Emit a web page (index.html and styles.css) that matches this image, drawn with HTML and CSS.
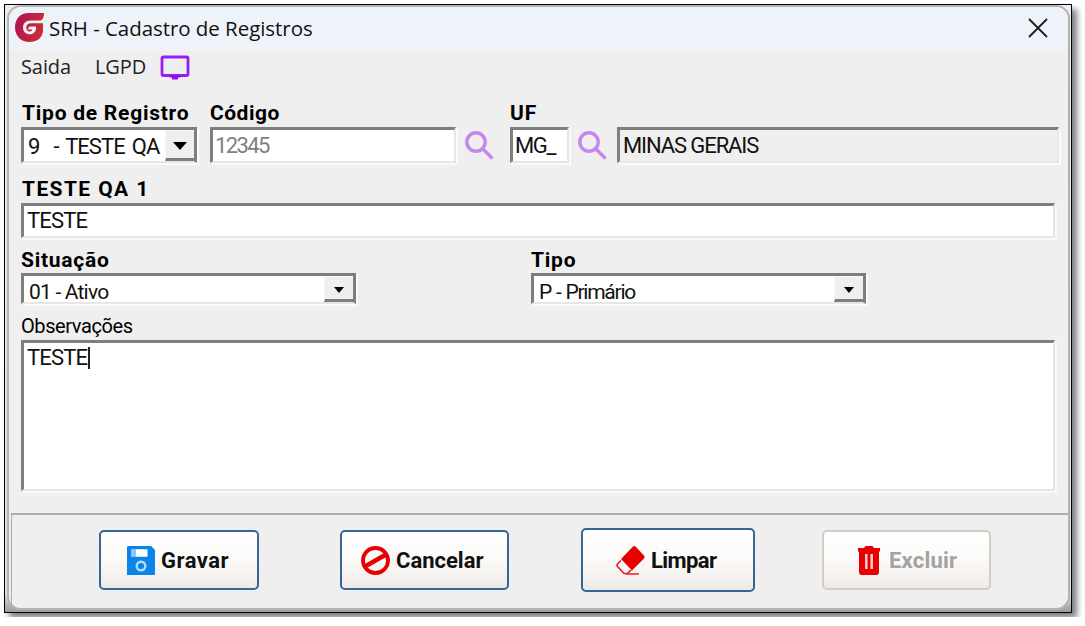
FILE: index.html
```html
<!DOCTYPE html>
<html lang="pt-BR">
<head>
  <meta charset="UTF-8">
  <title>SRH - Cadastro de Registros</title>
  <link rel="stylesheet" href="styles.css">
</head>
<body>
  <div class="frame">
    <div class="window">
      <div class="titlebar">
        <svg class="logo" width="29" height="29" viewBox="0 0 29 29">
          <defs>
            <linearGradient id="logoFill" x1="0" y1="0" x2="1" y2="0.3">
              <stop offset="0" stop-color="#ad1253"/>
              <stop offset="1" stop-color="#cb2b36"/>
            </linearGradient>
          </defs>
          <path fill="url(#logoFill)" d="M29 0H14C5 0 0 6 0 14.500C0 23 6 29 14.500 29C23 29 28 24 28 17V9H23C27 8 29 5 29 0Z"/>
          <path fill="#eef3f9" d="M29 7.500H16C11 7.500 8 10.300 8 14.500C8 18.800 11 21.300 14.500 21.300C18.300 21.300 20.600 19.200 21 16V13.500H14.500L12.500 16.500H17.300C16.800 18 16 18.500 14.500 18.500C12.500 18.500 11.300 17 11.300 14.700C11.300 12 13 10.300 16 10.300H29Z"/>
        </svg>
        <span class="title">SRH - Cadastro de Registros</span>
        <svg class="close" width="20" height="20" viewBox="0 0 20 20">
          <path d="M1 1L19 19M19 1L1 19" stroke="#1c1c1c" stroke-width="1.800" fill="none"/>
        </svg>
      </div>

      <div class="menu">
        <span class="menu-saida">Saida</span>
        <span class="menu-lgpd">LGPD</span>
        <svg width="30" height="25" viewBox="0 0 30 25">
          <rect x="2" y="2" width="26" height="18.500" rx="1.500" fill="none" stroke="#9a1df5" stroke-width="2.800"/>
          <path d="M9.500 20H20.500V22.500H18V24.500H12V22.500H9.500Z" fill="#8d0ef0"/>
        </svg>
      </div>

      <div class="form">
        <div class="row row-top">
          <div class="group group-registro">
            <div class="label label-registro">Tipo de Registro</div>
            <div class="field select">
              <span class="value value-registro">9 &nbsp;- TESTE QA</span>
              <span class="arrow"><svg width="14" height="8" viewBox="0 0 14 8"><path d="M0 0H14L7 8Z"/></svg></span>
            </div>
          </div>
          <div class="group group-codigo">
            <div class="label label-codigo">Código</div>
            <div class="field disabled"><span class="value value-codigo">12345</span></div>
          </div>
          <svg class="search" width="29" height="29" viewBox="0 0 29 29">
            <circle cx="11" cy="11" r="9.200"/>
            <path d="M17.500 17.500L27.500 27.500"/>
          </svg>
          <div class="group group-uf">
            <div class="label label-uf">UF</div>
            <div class="field"><span class="value value-uf">MG_</span></div>
          </div>
          <svg class="search search-uf" width="29" height="29" viewBox="0 0 29 29">
            <circle cx="11" cy="11" r="9.200"/>
            <path d="M17.500 17.500L27.500 27.500"/>
          </svg>
          <div class="group group-estado">
            <div class="field readonly"><span class="value value-estado">MINAS GERAIS</span></div>
          </div>
        </div>

        <div class="label label-teste">TESTE QA 1</div>
        <div class="field field-teste"><span class="value value-teste">TESTE</span></div>

        <div class="row row-mid">
          <div class="group group-combo">
            <div class="label label-situacao">Situação</div>
            <div class="field select combo">
              <span class="value value-ativo">01 - Ativo</span>
              <span class="arrow"><svg width="10" height="6" viewBox="0 0 10 6"><path d="M0 0H10L5 6Z"/></svg></span>
            </div>
          </div>
          <div class="group group-combo">
            <div class="label label-tipo">Tipo</div>
            <div class="field select combo">
              <span class="value value-primario">P - Primário</span>
              <span class="arrow"><svg width="10" height="6" viewBox="0 0 10 6"><path d="M0 0H10L5 6Z"/></svg></span>
            </div>
          </div>
        </div>

        <div class="label label-obs">Observações</div>
        <div class="field memo"><span class="value value-teste">TESTE</span><span class="caret"></span></div>
      </div>

      <div class="footer">
        <button class="btn btn-gravar">
          <svg width="28" height="29" viewBox="0 0 28 29">
            <path d="M1 0H24L28 4V29H0V1Z" fill="#0a84ea"/>
            <rect x="4" y="3" width="17" height="8" rx="1" fill="#8cc6f7"/>
            <rect x="9" y="3.500" width="11" height="7" fill="#fff"/>
            <circle cx="14" cy="20" r="4.300" fill="none" stroke="#b5dcfb" stroke-width="2.400"/>
          </svg>
          <span class="text-gravar">Gravar</span>
        </button>
        <button class="btn btn-cancelar">
          <svg width="29" height="29" viewBox="0 0 29 29">
            <circle cx="14.500" cy="14.500" r="12.500" fill="none" stroke="#e80000" stroke-width="3.800"/>
            <path d="M4 20.500L25 8.500" stroke="#e80000" stroke-width="4.500"/>
          </svg>
          <span class="text-cancelar">Cancelar</span>
        </button>
        <button class="btn btn-limpar">
          <svg width="29" height="29" viewBox="0 0 29 29">
            <path d="M17 0.500Q18.500 -0.500 20 1L28 9.500Q29 11 28 12.500L16 24.500L5 13Z" fill="#e80000"/>
            <path d="M5 14.500L1.500 18Q0.500 19 1.500 20.500L8 27.500H11.500L15 24M10 28H23" fill="none" stroke="#e8202a" stroke-width="1.700"/>
          </svg>
          <span class="text-limpar">Limpar</span>
        </button>
        <button class="btn btn-excluir" disabled>
          <svg width="22" height="29" viewBox="0 0 22 29">
            <path d="M0 2H6L7.500 0H14.500L16 2H22V5.500H0Z" fill="#e80000"/>
            <path d="M1 5H21V26Q21 29 18 29H4Q1 29 1 26Z" fill="#e80000"/>
            <path d="M8.300 8V23M13.700 8V23" stroke="#f7cfcf" stroke-width="2.500"/>
          </svg>
          <span class="text-excluir">Excluir</span>
        </button>
      </div>
    </div>
  </div>
</body>
</html>
```

FILE: styles.css
```css
* {
  box-sizing: border-box;
}

body {
  margin: 0;
  padding: 4px;
  background: #fff;
  font-family: Roboto, "Liberation Sans", sans-serif;
  color: #111;
  overflow: hidden;
}

.frame {
  width: 1068px;
  height: 609px;
  padding: 0 1px 2px 2px;
  border: 1px solid #000;
  background: linear-gradient(#ececec, #dedede 97%, #9c9c9c);
  box-shadow: 5px 5px 6px rgba(0, 0, 0, 0.5);
}

.window {
  display: flex;
  flex-direction: column;
  height: 605px;
  border: 2px solid #b2b2b2;
  border-radius: 14px;
  background: #efefef;
  overflow: hidden;
}

.titlebar {
  display: flex;
  align-items: center;
  height: 44px;
  padding: 0 20px 0 6px;
  background: #eef3f9;
}

.logo {
  margin-top: -3px;
}

.title {
  flex: 1;
  margin-left: 5px;
  margin-top: -3px;
  font-family: "Open Sans", "Noto Sans", sans-serif;
  font-size: 20.5px;
  letter-spacing: -0.05px;
  white-space: nowrap;
}

.close {
  margin-top: -2px;
}

.menu {
  display: flex;
  align-items: center;
  height: 32px;
  padding-left: 12px;
  font-family: "Open Sans", "Noto Sans", sans-serif;
  font-size: 20px;
  color: #222;
}

.menu span {
  margin-top: -2px;
  letter-spacing: -0.1px;
  white-space: nowrap;
}

.menu-saida {
  width: 74px;
}

.menu-lgpd {
  width: 65px;
}

.form {
  height: 430px;
  padding: 18px 6px 0 12px;
}

.row {
  display: flex;
  align-items: flex-end;
}

.label {
  height: 26px;
  padding-left: 1px;
  line-height: 25px;
  font-size: 21px;
  font-weight: bold;
  letter-spacing: 0.75px;
  color: #000;
  white-space: nowrap;
}

.label-codigo {
  padding-left: 0;
  letter-spacing: 0.5px;
}

.label-uf {
  padding-left: 0;
  letter-spacing: 1px;
}

.label-situacao,
.label-tipo {
  padding-left: 0;
  line-height: 27px;
}

.field {
  display: flex;
  height: 35px;
  border: solid #7e7e7e;
  border-width: 3px 2px 2px 3px;
  border-right-color: #e6e6e6;
  border-bottom-color: #e6e6e6;
  background: #fff;
  box-shadow: 2px 2px 0 #fafafa;
}

.value {
  font-size: 22px;
  line-height: 30px;
  margin-left: 3px;
  white-space: pre;
}

.value-registro {
  margin-left: 4px;
  line-height: 33px;
  letter-spacing: -0.95px;
  word-spacing: 2.5px;
}

.value-codigo {
  margin-left: 2px;
  line-height: 31px;
  letter-spacing: -1.6px;
}

.value-uf {
  margin-left: 2px;
  line-height: 31px;
  letter-spacing: -1.4px;
}

.value-estado {
  line-height: 31px;
  letter-spacing: -1.1px;
}

.value-teste {
  letter-spacing: -0.8px;
}

.disabled {
  color: #808080;
}

.readonly {
  background: #efefef;
}

.select {
  justify-content: space-between;
  border-right: 3px solid #7e7e7e;
}

.arrow {
  display: flex;
  align-items: center;
  justify-content: center;
  width: 29px;
  border: solid #f8f8f8;
  border-width: 1px 0 3px 1px;
  border-bottom-color: #7e7e7e;
  background: #efefef;
}

.row-top .arrow {
  padding-top: 3px;
}

.combo .arrow {
  padding-top: 3px;
}

.group-registro {
  width: 176px;
  margin-right: 13px;
}

.group-codigo {
  width: 246px;
}

.search {
  margin: 0 16px 3px 9px;
  fill: none;
  stroke: #c586ee;
  stroke-width: 3.4;
}

.group-uf {
  width: 59px;
}

.search-uf {
  margin-right: 10px;
}

.group-estado {
  width: 442px;
}

.row-top .field {
  height: 36px;
}

.label-teste {
  margin-top: 14px;
  letter-spacing: 1.4px;
}

.field-teste {
  width: 1034px;
}

.row-mid {
  gap: 175px;
  margin-top: 9px;
}

.group-combo {
  width: 335px;
}

.combo {
  height: 31px;
}

.combo .value {
  margin-left: 5px;
  font-size: 21px;
  line-height: 33px;
}

.value-ativo {
  letter-spacing: -0.8px;
}

.value-primario {
  letter-spacing: -1.25px;
  word-spacing: 1px;
}

.label-obs {
  height: 26px;
  margin-top: 10px;
  padding-left: 0;
  line-height: 25px;
  font-size: 20px;
  font-weight: normal;
  letter-spacing: -0.4px;
}

.memo {
  width: 1034px;
  height: 151px;
}

.caret {
  width: 2px;
  height: 22px;
  margin-top: 4px;
  margin-left: 1px;
  background: #222;
}

.footer {
  display: flex;
  flex: 1;
  align-items: center;
  margin-left: 2px;
  padding: 0 0 3px 87px;
  border-top: 2px solid #adadad;
  border-left: 1px solid #adadad;
}

.btn {
  display: flex;
  align-items: center;
  height: 60px;
  padding: 0;
  border: 2px solid #386693;
  border-radius: 5px;
  background: linear-gradient(#fff, #fcfbfa 45%, #efeae6);
  font-family: inherit;
  font-size: 22px;
  font-weight: bold;
  color: #111;
  white-space: nowrap;
}

.btn svg {
  flex: none;
  margin-right: 6px;
}

.btn-gravar {
  width: 160px;
  margin-right: 81px;
  padding-left: 26px;
}

.btn-cancelar {
  width: 169px;
  margin-right: 72px;
  padding-left: 19px;
}

.btn-limpar {
  width: 174px;
  height: 64px;
  margin-right: 67px;
  padding-left: 33px;
}

.btn-excluir {
  width: 169px;
  padding-left: 34px;
  border-color: #d3cdc4;
  color: #a3a3a3;
}

.btn-excluir svg {
  margin-right: 9px;
}

.text-gravar {
  letter-spacing: 0.5px;
}

.text-limpar {
  letter-spacing: -0.6px;
}

.text-excluir {
  letter-spacing: 0.2px;
}
```
